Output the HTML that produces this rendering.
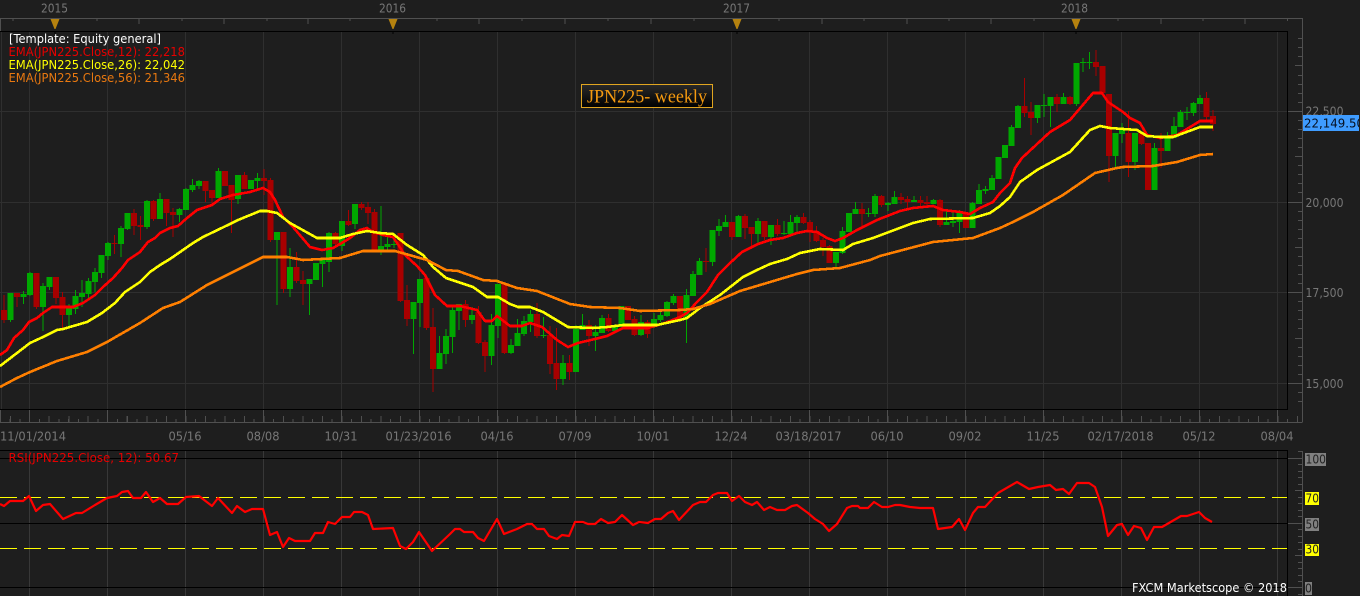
<!DOCTYPE html>
<html>
<head>
<meta charset="utf-8">
<title>JPN225 weekly</title>
<style>
html,body{margin:0;padding:0;background:#1e1e1e;width:1360px;height:596px;overflow:hidden}
svg{display:block;position:absolute;left:0;top:0}
text{font-family:"DejaVu Sans","Liberation Sans",sans-serif;font-size:12px}
.ax{fill:#777777}
.c{shape-rendering:crispEdges}
.d{fill:#222}
</style>
</head>
<body>
<svg width="1360" height="596" viewBox="0 0 1360 596" xmlns="http://www.w3.org/2000/svg">
<defs>
<linearGradient id="tg" x1="0" y1="0" x2="0" y2="1"><stop offset="0" stop-color="#2a2a2a"/><stop offset="1" stop-color="#000"/></linearGradient>
<clipPath id="pc"><rect x="1303" y="115" width="56" height="16"/></clipPath>
<clipPath id="plot"><rect x="0" y="32" width="1287" height="377"/></clipPath>
</defs>
<rect width="1360" height="596" fill="#1e1e1e"/>

<!-- main grid -->
<path class="c" fill="none" stroke="#2f2f2f" d="M1.5 32V409M29.5 32V409M107.5 32V409M185.5 32V409M263.5 32V409M341.5 32V409M419.5 32V409M497.5 32V409M575.5 32V409M653.5 32V409M731.5 32V409M809.5 32V409M887.5 32V409M965.5 32V409M1043.5 32V409M1121.5 32V409M1199.5 32V409M1277.5 32V409M0 111.5H1287M0 202.5H1287M0 292.5H1287M0 383.5H1287"/>

<!-- top ruler -->
<path class="c" fill="none" stroke="#505050" d="M0 18.5H1302.5M.5 18V31M13 18V21M55 18V24M97 18V21M139 18V24M182 18V21M224 18V24M267 18V21M308 18V24M350 18V21M393 18V24M437 18V21M479 18V24M522 18V21M565 18V24M608 18V21M651 18V24M694 18V21M737 18V24M779 18V21M822 18V24M864 18V21M907 18V24M949 18V21M991 18V24M1034 18V21M1076 18V24M1118 18V21M1161 18V24M1203 18V21M1245 18V24M1287.5 18V21"/>
<text class="ax" x="41" y="12.5" textLength="27" lengthAdjust="spacingAndGlyphs">2015</text>
<text class="ax" x="379" y="12.5" textLength="27" lengthAdjust="spacingAndGlyphs">2016</text>
<text class="ax" x="723" y="12.5" textLength="27" lengthAdjust="spacingAndGlyphs">2017</text>
<text class="ax" x="1061" y="12.5" textLength="27" lengthAdjust="spacingAndGlyphs">2018</text>
<path fill="#b5820f" d="M50.5 19H59.5L55.5 29H54.5ZM388.5 19H397.5L393.5 29H392.5ZM732.5 19H741.5L737.5 29H736.5ZM1071.5 19H1080.5L1076.5 29H1075.5Z"/>

<!-- right axis -->
<path class="c" fill="none" stroke="#505050" d="M1302.5 18V422M0 422.5H1302.5M.5 409V422M1288 111.5H1302M1288 202.5H1302M1288 292.5H1302M1288 383.5H1302M1295 65.5H1302M1295 156.5H1302M1295 247.5H1302M1295 338.5H1302M1298 38.5H1302M1298 47.5H1302M1298 56.5H1302M1298 75.5H1302M1298 84.5H1302M1298 93.5H1302M1298 102.5H1302M1298 120.5H1302M1298 129.5H1302M1298 138.5H1302M1298 147.5H1302M1298 165.5H1302M1298 174.5H1302M1298 183.5H1302M1298 192.5H1302M1298 211.5H1302M1298 220.5H1302M1298 229.5H1302M1298 238.5H1302M1298 256.5H1302M1298 265.5H1302M1298 274.5H1302M1298 283.5H1302M1298 301.5H1302M1298 310.5H1302M1298 319.5H1302M1298 328.5H1302M1298 347.5H1302M1298 356.5H1302M1298 365.5H1302M1298 374.5H1302M1298 392.5H1302M1298 401.5H1302"/>
<text class="ax" x="1305.5" y="115.5" textLength="38" lengthAdjust="spacingAndGlyphs">22,500</text>
<text class="ax" x="1305.5" y="207" textLength="38" lengthAdjust="spacingAndGlyphs">20,000</text>
<text class="ax" x="1305.5" y="297" textLength="38" lengthAdjust="spacingAndGlyphs">17,500</text>
<text class="ax" x="1305.5" y="388" textLength="38" lengthAdjust="spacingAndGlyphs">15,000</text>

<!-- bottom ruler -->
<path class="c" fill="none" stroke="#505050" stroke-width="3" stroke-dasharray="1 8.75" d="M0 420.5H1302"/>
<path class="c" fill="none" stroke="#505050" stroke-width="6" stroke-dasharray="1 18.5" d="M9.75 419H1302"/>
<path class="c" fill="none" stroke="#505050" d="M29.5 410V422M107.5 410V422M185.5 410V422M263.5 410V422M341.5 410V422M419.5 410V422M497.5 410V422M575.5 410V422M653.5 410V422M731.5 410V422M809.5 410V422M887.5 410V422M965.5 410V422M1043.5 410V422M1121.5 410V422M1199.5 410V422M1277.5 410V422"/>
<text class="ax" x="0" y="440.5" textLength="66" lengthAdjust="spacingAndGlyphs">11/01/2014</text>
<text class="ax" x="168.5" y="440.5" textLength="33" lengthAdjust="spacingAndGlyphs">05/16</text>
<text class="ax" x="246.5" y="440.5" textLength="33" lengthAdjust="spacingAndGlyphs">08/08</text>
<text class="ax" x="324.5" y="440.5" textLength="33" lengthAdjust="spacingAndGlyphs">10/31</text>
<text class="ax" x="385.5" y="440.5" textLength="66" lengthAdjust="spacingAndGlyphs">01/23/2016</text>
<text class="ax" x="480.5" y="440.5" textLength="33" lengthAdjust="spacingAndGlyphs">04/16</text>
<text class="ax" x="558.5" y="440.5" textLength="33" lengthAdjust="spacingAndGlyphs">07/09</text>
<text class="ax" x="636.5" y="440.5" textLength="33" lengthAdjust="spacingAndGlyphs">10/01</text>
<text class="ax" x="714.5" y="440.5" textLength="33" lengthAdjust="spacingAndGlyphs">12/24</text>
<text class="ax" x="775.5" y="440.5" textLength="66" lengthAdjust="spacingAndGlyphs">03/18/2017</text>
<text class="ax" x="870.5" y="440.5" textLength="33" lengthAdjust="spacingAndGlyphs">06/10</text>
<text class="ax" x="948.5" y="440.5" textLength="33" lengthAdjust="spacingAndGlyphs">09/02</text>
<text class="ax" x="1026.5" y="440.5" textLength="33" lengthAdjust="spacingAndGlyphs">11/25</text>
<text class="ax" x="1087.5" y="440.5" textLength="66" lengthAdjust="spacingAndGlyphs">02/17/2018</text>
<text class="ax" x="1182.5" y="440.5" textLength="33" lengthAdjust="spacingAndGlyphs">05/12</text>
<text class="ax" x="1260.5" y="440.5" textLength="33" lengthAdjust="spacingAndGlyphs">08/04</text>

<!-- candles -->
<g class="c" fill="none" clip-path="url(#plot)">
<path stroke="#00a800" d="M10.5 293V322M23.5 291V304M30 272V296M43 283V331M49.5 277V290M69 304V327M75.5 290V314M82 280V307M88.5 278V298M95 268V292M101.5 255V278M108 242V260M121 226V257M127.5 213V230M147 200V229M160 193V219M179.5 208V222M186 188V210M192.5 179V192M199 180V189M218.5 168V198M238 175V204M251 180V189M257.5 173V190M277 232V305M290 248V297M309.5 279V315M316 263V280M322.5 260V287M329 232V272M342 221V251M355 204V229M381 206V255M387.5 237V250M394 233V248M413.5 302V354M420 279V327M439.5 336V369M446 329V364M452.5 307V353M459 304V330M472 307V324M491.5 314V365M498 284V338M511 339V354M517.5 319V346M524 316V336M530.5 310V332M543.5 317V338M563 355V385M576 325V372M582.5 314V330M595.5 325V351M602 315V333M615 324V332M621.5 306V327M641 315V336M654 313V328M660.5 310V322M667 301V317M673.5 294V305M686.5 289V343M693 271V296M699.5 258V275M712.5 230V266M719 219V236M725.5 215V227M738.5 215V237M758 218V244M771 225V245M784 221V235M790.5 215V236M797 215V232M836 252V268M842.5 227V254M849 213V232M855.5 202V214M868.5 208V217M875 194V217M888 202V211M894.5 191V204M914 196V202M933.5 199V204M946.5 211V225M953 210V227M959.5 210V233M972.5 202V228M979 184V204M985.5 186V194M992 175V190M998.5 157V179M1005 145V158M1011.5 125V146M1018 105V128M1037.5 105V123M1044 94V117M1050.5 97V127M1063.5 93V104M1076.5 63V106M1083 58V72M1089.5 52V69M1115.5 133V169M1122 123V143M1135 133V170M1154.5 143V190M1167.5 132V151M1174 117V138M1180.5 110V127M1187 107V120M1193.5 102V116M1200 95V104"/>
<path stroke="#a80000" d="M4 295V323M17 293V307M36.5 273V309M56 277V304M62.5 292V328M114.5 235V254M134 209V235M140.5 216V240M153.5 200V221M166.5 199V226M173 208V237M205.5 181V202M212 190V205M225 171V186M231.5 185V233M244.5 172V189M264 169V195M270.5 178V242M283.5 232V293M296.5 252V283M303 271V305M335.5 232V245M348.5 210V226M361.5 202V210M368 202V224M374.5 209V252M400.5 233V302M407 285V326M426.5 278V330M433 308V392M465.5 300V327M478.5 306V344M485 340V372M504.5 282V354M537 303V338M550 326V374M556.5 328V390M569.5 355V380M589 320V346M608.5 314V332M628 306V320M634.5 316V336M647.5 320V338M680 296V318M706 248V272M732 222V240M745 214V239M751.5 227V249M764.5 221V240M777.5 219V236M803.5 213V224M810 220V242M816.5 226V242M823 238V256M829.5 245V263M862 203V227M881.5 195V207M901 193V204M907.5 196V209M920.5 196V207M927 196V208M940 199V227M966 212V228M1024.5 78V117M1031 102V135M1057 94V112M1070 96V105M1096 50V76M1102.5 66V94M1109 94V182M1128.5 111V177M1141.5 132V145M1148 143V190M1161 133V168M1206.5 92V120M1213 110V131"/>
<path stroke="#00a800" stroke-width="6" d="M10.5 293V320M23.5 294V297M30 273V295M43 286V307M49.5 277V287M69 306V315M75.5 296V309M82 293V297M88.5 281V294M95 272V282M101.5 255V273M108 243V256M121 228V244M127.5 213V229M147 201V227M160 199V219M179.5 209V215M186 189V210M192.5 185V190M199 181V186M218.5 171V198M238 175V199M251 180V189M257.5 178V181M277 232V240M290 267V289M309.5 279V284M316 263V280M322.5 260V264M329 233V262M342 221V246M355 204V224M381 246V250M387.5 244V247M394 244V245M413.5 302V319M420 279V303M439.5 353V369M446 336V354M452.5 310V337M459 304V311M472 315V320M491.5 325V356M498 284V326M511 345V353M517.5 333V346M524 321V334M530.5 314V322M543.5 335V336M563 363V379M576 329V372M582.5 325V330M595.5 332V336M602 318V333M615 326V331M621.5 306V327M641 322V335M654 319V327M660.5 315V320M667 302V316M673.5 296V303M686.5 295V317M693 274V296M699.5 261V275M712.5 230V262M719 226V231M725.5 222V227M738.5 216V237M758 221V234M771 225V237M784 233V234M790.5 222V234M797 217V223M836 252V263M842.5 231V253M849 213V232M855.5 209V214M868.5 213V214M875 196V214M888 203V205M894.5 197V204M914 200V202M933.5 200V204M946.5 222V225M953 221V223M959.5 213V222M972.5 203V228M979 190V204M985.5 189V191M992 178V190M998.5 157V179M1005 145V158M1011.5 127V146M1018 106V128M1037.5 105V118M1044 105V106M1050.5 97V106M1063.5 97V104M1076.5 63V104M1083 62V63M1089.5 62V63M1115.5 133V156M1122 129V134M1135 133V162M1154.5 148V190M1167.5 138V151M1174 126V138M1180.5 112V127M1187 112V113M1193.5 103V113M1200 98V104"/>
<path stroke="#a80000" stroke-width="6" d="M4 310V320M17 293V297M36.5 273V307M56 277V298M62.5 297V315M114.5 243V244M134 213V226M140.5 225V227M153.5 201V219M166.5 199V213M173 212V215M205.5 181V191M212 190V198M225 171V186M231.5 185V200M244.5 175V189M264 178V181M270.5 180V240M283.5 232V289M296.5 267V281M303 280V284M335.5 233V244M348.5 221V225M361.5 204V208M368 207V213M374.5 212V250M400.5 233V301M407 300V319M426.5 278V328M433 327V369M465.5 304V320M478.5 312V343M485 342V356M504.5 284V353M537 314V336M550 335V364M556.5 363V379M569.5 363V372M589 325V336M608.5 318V331M628 306V320M634.5 319V335M647.5 322V334M680 296V317M706 261V262M732 222V237M745 216V228M751.5 227V234M764.5 221V237M777.5 225V234M803.5 217V223M810 222V232M816.5 231V241M823 240V247M829.5 246V263M862 209V214M881.5 196V205M901 197V200M907.5 199V202M920.5 200V203M927 202V204M940 200V225M966 213V228M1024.5 106V113M1031 112V118M1057 97V104M1070 97V104M1096 62V67M1102.5 66V93M1109 94V156M1128.5 133V162M1141.5 133V144M1148 143V190M1161 148V151M1206.5 98V117M1213 116V124"/>
</g>

<!-- EMA lines -->
<g class="c" fill="none" stroke-width="2.6" stroke-linejoin="round">
<polyline stroke="#ff0000" points="0,355 7,350 14,338 23,330 29,322 37,318 43,313 52,307 73,307 83,303 95,295 103,287 113,278 122,268 128,260 140,252 148,242 155,238 160,233 170,228 178,226 187,218 197,210 212,205 220,199 233,195 250,192 263,188 270,192 275,200 283,217 293,227 310,247 322,250 333,248 340,244 350,238 360,230 367,228 373,232 383,235 393,237 405,255 417,266 425,275 435,295 447,306 460,306 477,310 485,321 492,321 497,316 510,326 522,326 530,323 542,327 557,340 568,347 578,343 595,339 607,336 613,333 623,328 648,328 665,323 680,317 687,313 697,302 707,292 718,275 730,263 742,252 750,248 758,244 770,240 783,238 797,233 807,231 817,232 827,238 835,241 843,238 857,230 877,220 900,211 913,208 933,206 943,210 960,212 970,214 980,208 993,202 1000,193 1010,183 1015,168 1022,158 1050,132 1070,120 1093,93 1102,93 1108,102 1123,112 1130,118 1140,123 1147,135 1160,138 1177,135 1200,121 1213,121"/>
<polyline stroke="#ffff00" points="0,366 17,353 30,343 43,337 57,330 63,329 87,322 102,313 115,303 125,292 140,282 150,272 160,265 170,259 193,243 203,237 230,224 238,220 260,211 267,211 277,213 290,223 317,238 340,238 353,234 367,231 380,233 393,234 407,245 423,255 433,267 446,278 473,287 487,297 498,297 510,304 518,307 530,307 543,312 568,327 593,328 607,327 623,325 657,325 680,320 687,318 700,308 720,295 743,277 757,270 770,264 787,259 800,253 820,249 843,250 853,244 873,238 897,229 913,223 930,219 973,218 990,213 1000,206 1010,197 1020,182 1037,170 1070,152 1090,130 1100,126 1110,128 1137,130 1147,136 1160,137 1173,137 1200,127 1213,127"/>
<polyline stroke="#ff7f00" points="0,387 17,378 30,372 57,361 87,352 107,342 140,323 163,308 180,302 207,285 237,270 263,257 287,257 303,260 340,258 363,251 395,251 427,260 446,270 458,271 483,280 497,281 517,288 537,291 570,304 590,307 620,308 640,311 680,310 693,309 710,304 740,291 797,274 813,270 840,268 870,260 880,256 933,242 973,238 1000,228 1013,222 1033,212 1063,195 1095,173 1117,168 1123,167 1153,166 1177,162 1200,155 1213,154"/>
</g>

<!-- plot frame -->
<path class="c" fill="none" stroke="#000" d="M0 31.5H1288M1287.5 31V409.5M0 409.5H1288M55 31V34M393 31V34M737 31V34M1076 31V34"/>

<!-- legend -->
<text x="9" y="43" fill="#ffffff" textLength="152" lengthAdjust="spacingAndGlyphs">[Template: Equity general]</text>
<text x="8.5" y="56" fill="#e60000" textLength="176.5" lengthAdjust="spacingAndGlyphs">EMA(JPN225.Close,12): 22,218</text>
<text x="8.5" y="69" fill="#ffff00" textLength="176.5" lengthAdjust="spacingAndGlyphs">EMA(JPN225.Close,26): 22,042</text>
<text x="8.5" y="82" fill="#e87810" textLength="176.5" lengthAdjust="spacingAndGlyphs">EMA(JPN225.Close,56): 21,346</text>

<!-- title box -->
<rect x="581.5" y="84.5" width="131" height="23" fill="url(#tg)" stroke="#e0a520"/>
<text x="587" y="102.5" fill="#f59a10" textLength="120" lengthAdjust="spacingAndGlyphs" style="font-family:'Liberation Serif',serif;font-size:18.5px">JPN225- weekly</text>

<!-- price label -->
<rect x="1303" y="115" width="56" height="16" fill="#3f9cff"/>
<text x="1304" y="127.5" fill="#061020" textLength="60" lengthAdjust="spacingAndGlyphs" clip-path="url(#pc)">22,149.50</text>

<!-- RSI pane -->
<path class="c" fill="none" stroke="#383838" d="M29.5 451V596M107.5 451V596M185.5 451V596M263.5 451V596M341.5 451V596M419.5 451V596M497.5 451V596M575.5 451V596M653.5 451V596M731.5 451V596M809.5 451V596M887.5 451V596M965.5 451V596M1043.5 451V596M1121.5 451V596M1199.5 451V596M1277.5 451V596"/>
<path class="c" fill="none" stroke="#ffff00" stroke-dasharray="17 7" d="M0 497.5H1287M0 548.5H1287"/>
<path class="c" fill="none" stroke="#000" d="M0 450.5H1288M1287.5 450V596M0 458.5H1288M0 523.5H1288M0 587.5H1288"/>
<path class="c" fill="none" stroke="#505050" d="M1302.5 451V596M1288 458.5H1302M1288 523.5H1302M1288 587.5H1302M1295 490.5H1302M1295 555.5H1302M1298 451.5H1302M1298 464.5H1302M1298 471.5H1302M1298 477.5H1302M1298 484.5H1302M1298 497.5H1302M1298 503.5H1302M1298 510.5H1302M1298 516.5H1302M1298 529.5H1302M1298 536.5H1302M1298 542.5H1302M1298 549.5H1302M1298 562.5H1302M1298 568.5H1302M1298 575.5H1302M1298 581.5H1302M1298 594.5H1302"/>
<polyline fill="none" stroke="#ff0000" stroke-width="2.2" stroke-linejoin="round" points="0,504 4,506 10,501 23,501 29,496 36,511 43,505 50,504 63,519 76,513 82,513 95,505 107,498 117,496 122,492 128,491 133,498 141,498 146,492 153,502 160,498 167,504 178,504 186,497 199,496 212,506 218,498 232,513 237,506 245,512 252,509 263,509 270,535 277,532 283,547 289,538 295,541 310,541 315,533 323,533 328,522 335,524 342,517 350,517 354,512 362,512 368,515 373,529 393,528 400,546 406,549 413,542 419,532 432,551 450,534 455,529 460,529 464,532 473,532 478,538 484,541 497,519 504,534 517,529 527,524 532,524 537,529 544,529 549,536 557,539 562,535 569,536 575,522 583,522 588,524 595,524 601,519 608,523 615,522 622,515 633,525 639,522 648,523 655,519 661,519 668,513 673,511 679,520 693,505 700,502 706,502 713,495 718,493 727,493 732,501 739,496 745,502 752,505 757,502 764,510 770,507 777,510 785,510 792,506 797,505 808,513 815,519 823,524 829,531 837,524 847,508 852,506 858,506 860,508 868,508 874,502 882,507 888,507 895,505 900,505 910,507 920,508 933,508 938,529 952,527 959,519 965,530 973,513 978,507 985,507 998,493 1017,482 1029,489 1038,487 1050,485 1056,490 1063,489 1069,494 1077,483 1089,483 1095,487 1102,507 1108,536 1117,525 1122,524 1128,535 1134,526 1141,528 1147,540 1154,527 1162,527 1181,516 1187,516 1199,512 1205,518 1212,522"/>
<text x="8.5" y="462" fill="#e60000" textLength="170.5" lengthAdjust="spacingAndGlyphs">RSI(JPN225.Close, 12): 50.67</text>
<text x="1132" y="592" fill="#ffffff" textLength="155" lengthAdjust="spacingAndGlyphs">FXCM Marketscope © 2018</text>

<rect x="1305" y="453" width="21" height="13" fill="#808080"/>
<rect x="1305" y="492" width="14" height="13" fill="#ffff00"/>
<rect x="1305" y="518" width="14" height="13" fill="#808080"/>
<rect x="1305" y="544" width="14" height="12" fill="#ffff00"/>
<rect x="1305" y="582" width="7" height="13" fill="#808080"/>
<text class="d" x="1305.5" y="463.5" textLength="20.5" lengthAdjust="spacingAndGlyphs">100</text>
<text class="d" x="1305.5" y="502.5" textLength="13.5" lengthAdjust="spacingAndGlyphs">70</text>
<text class="d" x="1305.5" y="528.5" textLength="13.5" lengthAdjust="spacingAndGlyphs">50</text>
<text class="d" x="1305.5" y="553.5" textLength="13.5" lengthAdjust="spacingAndGlyphs">30</text>
<text class="d" x="1305" y="592.5" textLength="7" lengthAdjust="spacingAndGlyphs">0</text>
</svg>
</body>
</html>
